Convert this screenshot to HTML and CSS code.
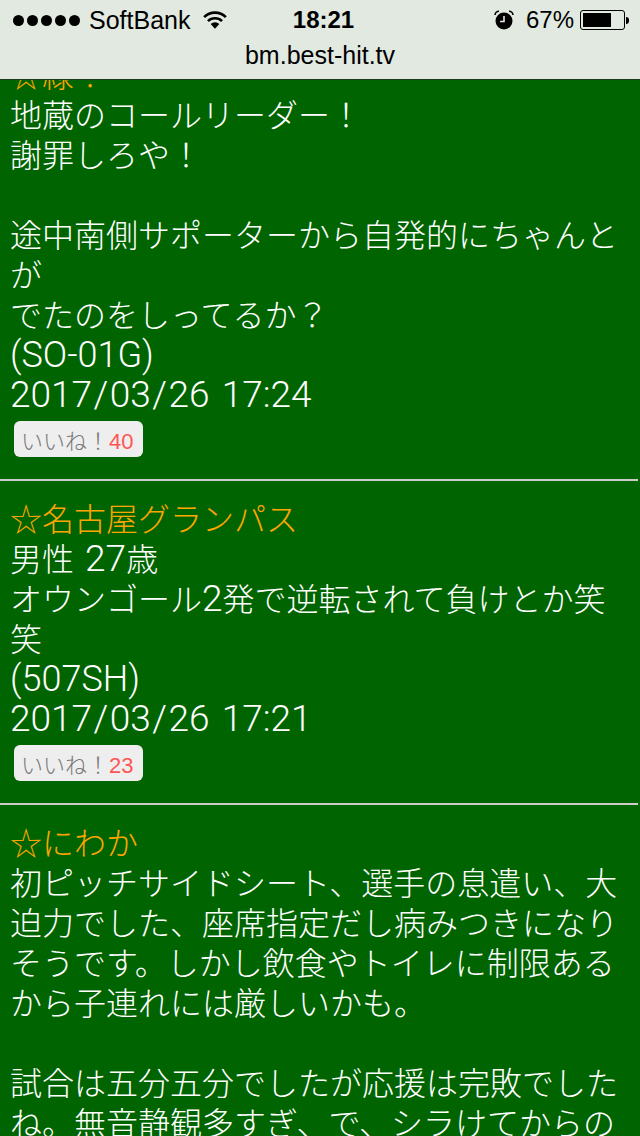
FILE: index.html
```html
<!DOCTYPE html>
<html lang="ja">
<head>
    <meta charset="UTF-8">
    <meta name="viewport" content="width=device-width, initial-scale=1.0">
    <title>bm.best-hit.tv</title>
    <link rel="stylesheet" href="styles.css">
</head>
<body>

    <header class="browser-bar">
        <div class="status-row">
            <div class="status-left">
                <span class="signal">
                    <i></i><i></i><i></i><i></i><i></i>
                </span>
                <span class="carrier">SoftBank</span>
                <svg class="wifi" width="24" height="18" viewBox="0 0 25 18">
                    <path d="M12.5 18 L8 13.2 A6.4 6.4 0 0 1 17 13.2 Z" fill="#000"/>
                    <path d="M5.2 10.2 A10.4 10.4 0 0 1 19.8 10.2" fill="none" stroke="#000" stroke-width="2.8"/>
                    <path d="M1.2 6 A16 16 0 0 1 23.8 6" fill="none" stroke="#000" stroke-width="2.8"/>
                </svg>
            </div>
            <div class="status-time">18:21</div>
            <div class="status-right">
                <svg class="alarm" width="20" height="20" viewBox="0 0 20 20">
                    <circle cx="10" cy="11" r="8.5" fill="#000"/>
                    <path d="M10 6 V11.5 H6" fill="none" stroke="#e1e9e0" stroke-width="1.6"/>
                    <path d="M1 5 A4 4 0 0 1 5 1.2 M19 5 A4 4 0 0 0 15 1.2" fill="none" stroke="#000" stroke-width="1.6"/>
                </svg>
                <span class="battery-pct">67%</span>
                <span class="battery"><span class="battery-level" style="width: 72%"></span></span>
                <span class="battery-tip"></span>
            </div>
        </div>
        <div class="url-row">bm.best-hit.tv</div>
    </header>

    <main class="board">
        <div class="post post-first">
            <div class="post-name">☆緑！</div>
            <div class="post-body">
                地蔵のコールリーダー！<br>
                謝罪しろや！<br><br>
                途中南側サポーターから自発的にちゃんとが<br>
                でたのをしってるか？<br>
                <span class="latin">(SO-01G)</span><br>
                <span class="date">2017<span class="slash">/</span>03<span class="slash">/</span>26 17:24</span>
            </div>
            <button class="like">いいね！<span class="like-count">40</span></button>
        </div>
        <hr class="divider">
        <div class="post">
            <div class="post-name">☆名古屋グランパス</div>
            <div class="post-body">
                男性 <span class="date">27</span>歳<br>
                オウンゴール<span class="date">2</span>発で逆転されて負けとか笑笑<br>
                <span class="latin">(507SH)</span><br>
                <span class="date">2017<span class="slash">/</span>03<span class="slash">/</span>26 17:21</span>
            </div>
            <button class="like">いいね！<span class="like-count">23</span></button>
        </div>
        <hr class="divider">
        <div class="post">
            <div class="post-name">☆にわか</div>
            <div class="post-body">
                初ピッチサイドシート、選手の息遣い、大迫力でした、座席指定だし病みつきになりそうです。しかし飲食やトイレに制限あるから子連れには厳しいかも。<br><br>
                試合は五分五分でしたが応援は完敗でしたね。無音静観多すぎ、で、シラけてからの
            </div>
        </div>
    </main>

</body>
</html>
```

FILE: styles.css
```css
html, body {
    margin: 0;
    height: 1136px;
    overflow: hidden;
}

body {
    display: flex;
    flex-direction: column;
    background: #006400;
    font-family: "Noto Sans CJK JP", sans-serif;
}

.browser-bar {
    flex: none;
    height: 79px;
    background: #e1e9e0;
    border-bottom: 1px solid #1c3a1c;
    color: #000;
    font-family: "Liberation Sans", sans-serif;
    font-size: 25px;
}

.status-row {
    display: flex;
    align-items: center;
    height: 40px;
    padding: 0 11px 0 13px;
}

.status-left,
.status-right {
    flex: 1;
    display: flex;
    align-items: center;
}

.status-right {
    justify-content: flex-end;
}

.signal {
    display: flex;
    gap: 3px;
}

.signal i {
    width: 11px;
    height: 11px;
    border-radius: 50%;
    background: #000;
}

.carrier {
    margin-left: 9px;
}

.wifi {
    margin-left: 13px;
}

.status-time {
    margin-left: 5px;
    font-size: 24px;
    font-weight: bold;
}

.alarm {
    margin-right: 12px;
}

.battery-pct {
    margin-right: 6px;
    font-size: 24px;
}

.battery {
    box-sizing: border-box;
    width: 45px;
    height: 20px;
    padding: 2px;
    border: 1px solid #000;
    border-radius: 3px;
}

.battery-level {
    display: block;
    height: 100%;
    background: #000;
}

.battery-tip {
    width: 3px;
    height: 7px;
    margin-left: 1px;
    background: #000;
    border-radius: 0 3px 3px 0;
}

.url-row {
    text-align: center;
    line-height: 30px;
}

.board {
    flex: 1;
    overflow: hidden;
}

.post {
    padding: 16px 10px 22px;
    color: #fff;
    font-size: 32px;
    font-weight: 300;
    line-height: 40px;
}

/* page is scrolled, first name sits under the bar */
.post-first {
    margin-top: -27px;
    padding-top: 0;
}

.post-name {
    color: #ffa500;
}

.post-body {
    word-spacing: 4px;
}

.latin,
.date {
    font-family: "Roboto", sans-serif;
    line-height: 1;
}

.latin {
    font-size: 36px;
}

.date {
    font-size: 37px;
    word-spacing: 3px;
}

.slash {
    padding: 0 1.5px;
}

.like {
    display: block;
    margin: 8px 0 0 4px;
    width: 129px;
    height: 36px;
    padding: 0 0 0 7px;
    border: none;
    border-radius: 6px;
    background: #eee;
    color: #777;
    font-family: inherit;
    font-size: 22px;
    font-weight: 300;
    text-align: left;
}

.like-count {
    color: #ff5555;
    font-family: "Liberation Sans", sans-serif;
    font-size: 22px;
}

.divider {
    margin: 0 2px 0 0;
    height: 2px;
    border: none;
    background: #ccc;
}
```
